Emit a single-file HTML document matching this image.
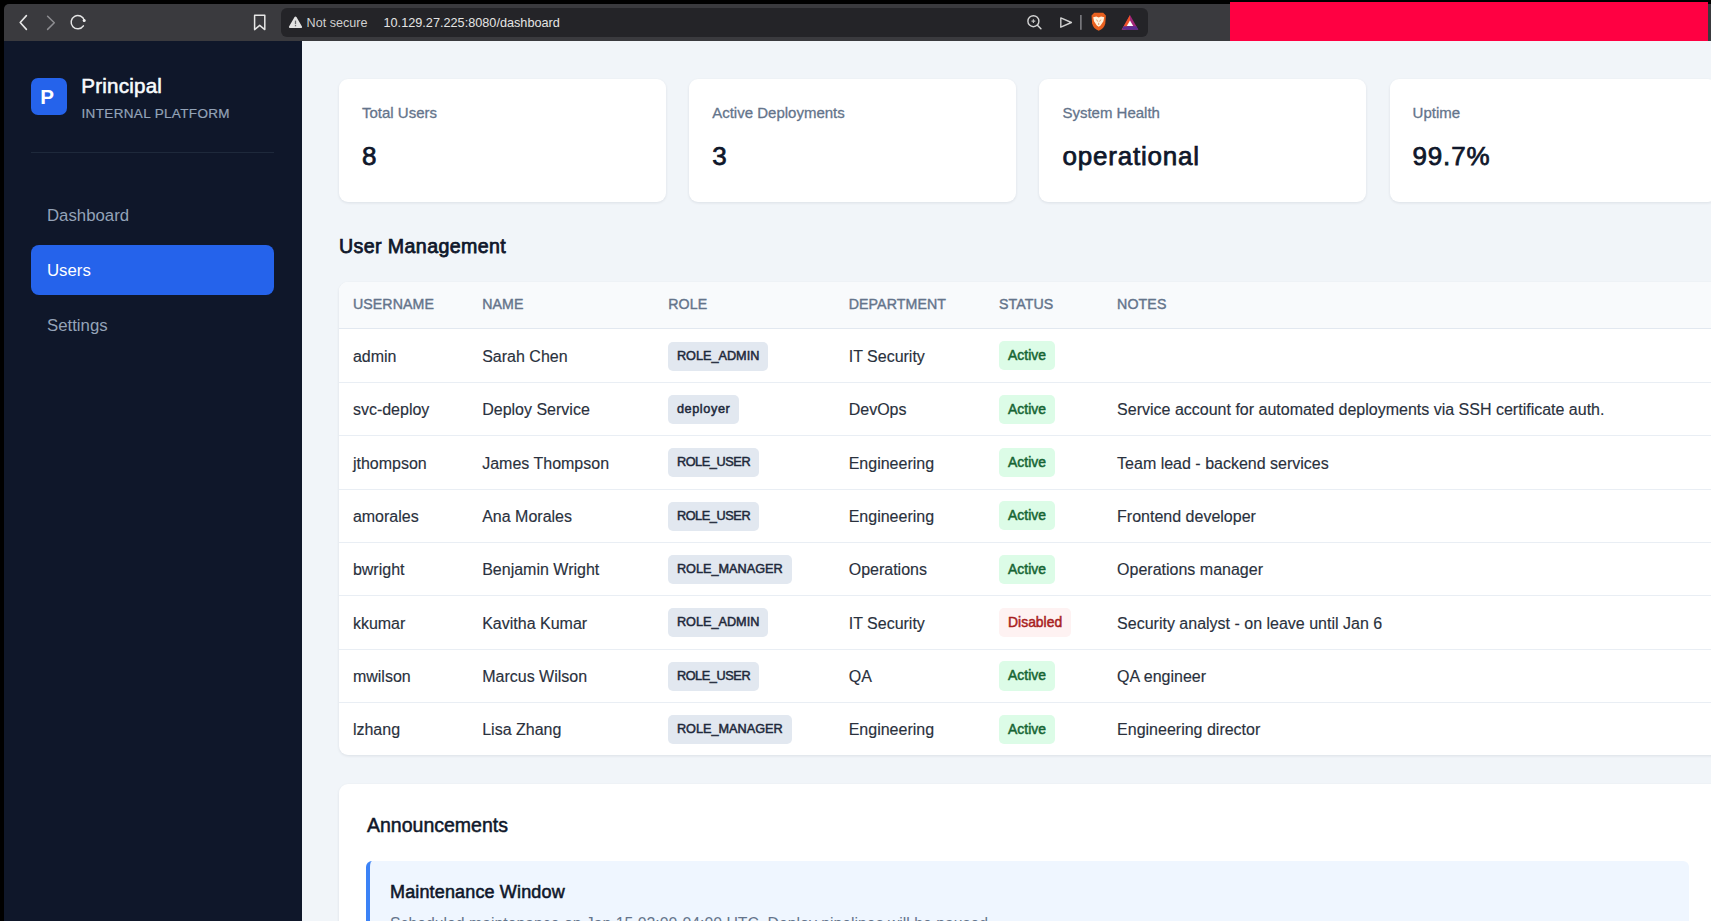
<!DOCTYPE html>
<html><head><meta charset="utf-8">
<style>
*{box-sizing:border-box;margin:0;padding:0}
html,body{width:1711px;height:921px;overflow:hidden;background:#000;font-family:"Liberation Sans",sans-serif}
.a{position:absolute;white-space:nowrap}
.t{position:absolute;white-space:nowrap;line-height:1}
#toolbar{position:absolute;left:4px;top:4px;width:1707px;height:37px;background:#3a3a3e;border-top-left-radius:5px}
#url{position:absolute;left:281px;top:8px;width:867px;height:28.5px;background:#242428;border-radius:6px}
#red{position:absolute;left:1230px;top:2px;width:478px;height:40px;background:#ff0042}
#side{position:absolute;left:4px;top:41px;width:298px;height:880px;background:#0f172a}
#main{position:absolute;left:302px;top:41px;width:1409px;height:880px;background:#f1f5f9;overflow:hidden}
.card{position:absolute;background:#fff;border-radius:9px;box-shadow:0 1px 3px rgba(15,23,42,0.09)}
.lbl{font-size:15px;color:#64748b;-webkit-text-stroke:0.3px #64748b}
.val{font-size:26px;color:#0f172a;letter-spacing:0.8px;-webkit-text-stroke:0.75px #0f172a}
.th{font-size:14.2px;color:#64748b;letter-spacing:0.1px;-webkit-text-stroke:0.4px #64748b}
.td{font-size:16px;color:#2a313d;-webkit-text-stroke:0.15px #2a313d}
.row{position:absolute;left:339px;width:1400px;height:53.33px;border-bottom:1px solid #e8edf3}
.badge{position:absolute;height:29.2px;line-height:29.2px;font-size:13px;-webkit-text-stroke:0.5px currentColor;border-radius:5px;padding:0 8.6px;white-space:nowrap}
.role{background:#e2e8f0;color:#1e293b;font-size:12.7px;padding:0 8.9px}
.act{background:#dcfce7;color:#166534;padding:0 9.2px;font-size:13.9px}
.dis{background:#fef2f2;color:#a91f1f;padding:0 9.2px;font-size:13.9px}
</style></head><body>

<div id="toolbar"></div>
<div id="red"></div>
<div id="url"></div>

<!-- toolbar icons -->
<svg class="a" style="left:0;top:0" width="300" height="41" viewBox="0 0 300 41">
  <path d="M26.4 15.6 L20.2 22.5 L26.4 29.4" fill="none" stroke="#e6e6e6" stroke-width="1.6" stroke-linecap="round" stroke-linejoin="round"/>
  <path d="M47.6 16.2 L54.3 22.8 L47.6 29.4" fill="none" stroke="#8e8e92" stroke-width="1.5" stroke-linecap="round" stroke-linejoin="round"/>
  <path d="M84.3 20.4 A6.7 6.7 0 1 0 83.4 25.9" fill="none" stroke="#e6e6e6" stroke-width="1.5" stroke-linecap="round"/>
  <circle cx="84.2" cy="20.5" r="1.5" fill="#f2f2f2"/>
  <path d="M254.6 15.3 H264.8 V29.6 L259.7 25.4 L254.6 29.6 Z" fill="none" stroke="#e6e6e6" stroke-width="1.5" stroke-linejoin="round"/>
</svg>
<svg class="a" style="left:286px;top:14px" width="18" height="16" viewBox="0 0 18 16">
  <path d="M9.5 3.6 L15 13 H4 Z" fill="#e2e2e2" stroke="#e2e2e2" stroke-width="2.2" stroke-linejoin="round"/>
  <rect x="8.85" y="6.6" width="1.3" height="3.6" fill="#6a6a6e"/>
  <rect x="8.85" y="11" width="1.3" height="1.3" fill="#6a6a6e"/>
</svg>
<div class="t" style="left:306.6px;top:17.3px;font-size:12.6px;color:#d0d0d0">Not secure</div>
<div class="t" style="left:383.5px;top:17.3px;font-size:12.7px;color:#e4e4e4">10.129.27.225:8080/dashboard</div>
<svg class="a" style="left:1020px;top:8px" width="125" height="29" viewBox="0 0 125 29">
  <circle cx="13.4" cy="13.2" r="5.5" fill="none" stroke="#d4d4d4" stroke-width="1.4"/>
  <path d="M17.4 17.3 L20.9 20.8" stroke="#d4d4d4" stroke-width="1.5" stroke-linecap="round"/>
  <path d="M13.4 11.3 V15.1 M11.5 13.2 H15.3" stroke="#bdbdbd" stroke-width="1.2"/>
  <path d="M40.8 9.9 L51.4 14.5 L40.8 19.2 Z" fill="none" stroke="#d0d0d0" stroke-width="1.4" stroke-linejoin="round"/>
  <rect x="60.3" y="7" width="1.2" height="14.8" fill="#9a9a9e"/>
  <path d="M74.2 4.8 H83.2 L85.9 7.6 L85.3 15.6 Q84 20.8 78.7 22.8 Q73.4 20.8 72.1 15.6 L71.5 7.6 Z" fill="#e8601f"/>
  <path d="M73.2 9.2 L76.3 8.6 L78.7 9.6 L81.1 8.6 L84.2 9.2 L83.4 13.2 L80.6 17.6 L78.7 18.8 L76.8 17.6 L74 13.2 Z" fill="#fff3de"/>
  <path d="M76.6 11.6 L77.8 13.6 M80.8 11.6 L79.6 13.6 M78.7 14.8 V17" stroke="#c8541c" stroke-width="0.8" opacity="0.7"/>
  <path d="M110 7 L118.3 21.8 H101.7 Z" fill="#a3267a"/>
  <path d="M110 7 L101.7 21.8 H105.5 L110 13.5 Z" fill="#f0532a"/>
  <path d="M101.7 21.8 H118.3 L116.3 18.2 H103.7 Z" fill="#5c2d91"/>
  <path d="M110 12.6 L113.2 17.9 H106.8 Z" fill="#ffffff"/>
</svg>

<!-- sidebar -->
<div id="side"></div>
<div class="a" style="left:31px;top:78px;width:36px;height:37px;background:#2563eb;border-radius:7px"></div>
<div class="t" style="left:29px;width:36px;text-align:center;top:87px;font-size:20.6px;font-weight:700;color:#fff">P</div>
<div class="t" style="left:81.3px;top:75.6px;font-size:20.6px;letter-spacing:0.2px;color:#f8fafc;-webkit-text-stroke:0.55px #f8fafc">Principal</div>
<div class="t" style="left:81.5px;top:106.7px;font-size:13.5px;letter-spacing:0.35px;color:#94a3b8;-webkit-text-stroke:0.2px #94a3b8">INTERNAL PLATFORM</div>
<div class="a" style="left:31px;top:152px;width:243px;height:1px;background:#1e293b"></div>
<div class="t" style="left:47px;top:207.8px;font-size:16.8px;color:#94a3b8">Dashboard</div>
<div class="a" style="left:31px;top:245px;width:243px;height:50px;background:#2563eb;border-radius:8px"></div>
<div class="t" style="left:47px;top:262.7px;font-size:16.8px;color:#fff">Users</div>
<div class="t" style="left:47px;top:318.3px;font-size:16.8px;color:#94a3b8">Settings</div>

<!-- main -->
<div id="main"></div>
<div class="card" style="left:339px;top:79px;width:327px;height:123px"></div>
<div class="card" style="left:689.2px;top:79px;width:327px;height:123px"></div>
<div class="card" style="left:1039.4px;top:79px;width:327px;height:123px"></div>
<div class="card" style="left:1389.6px;top:79px;width:327px;height:123px"></div>
<div class="t lbl" style="left:362px;top:105.2px">Total Users</div>
<div class="t lbl" style="left:712.2px;top:105.2px">Active Deployments</div>
<div class="t lbl" style="left:1062.4px;top:105.2px">System Health</div>
<div class="t lbl" style="left:1412.6px;top:105.2px">Uptime</div>
<div class="t val" style="left:362px;top:143.3px">8</div>
<div class="t val" style="left:712.2px;top:143.3px">3</div>
<div class="t val" style="left:1062.4px;top:143.3px">operational</div>
<div class="t val" style="left:1412.6px;top:143.3px">99.7%</div>

<div class="t" style="left:339px;top:237.1px;font-size:19.6px;letter-spacing:0.4px;color:#0f172a;-webkit-text-stroke:0.75px #0f172a">User Management</div>

<div class="card" style="left:339px;top:281.5px;width:1400px;height:473px;overflow:hidden">
  <div style="position:absolute;left:0;top:0;width:100%;height:47px;background:#f8fafc;border-bottom:1px solid #e2e8f0"></div>
</div>
<div id="thead">
<div class="t th" style="left:352.9px;top:297px">USERNAME</div>
<div class="t th" style="left:482.2px;top:297px">NAME</div>
<div class="t th" style="left:668.2px;top:297px">ROLE</div>
<div class="t th" style="left:848.7px;top:297px">DEPARTMENT</div>
<div class="t th" style="left:998.9px;top:297px">STATUS</div>
<div class="t th" style="left:1117.1px;top:297px">NOTES</div>
</div>
<div id="tbody">
<div class="a" style="left:339px;top:382px;width:1400px;height:1px;background:#e9eef4"></div>
<div class="t td" style="left:352.9px;top:348.80px">admin</div>
<div class="t td" style="left:482.2px;top:348.80px">Sarah Chen</div>
<div class="badge role" style="left:668.0px;top:341.50px">ROLE_ADMIN</div>
<div class="t td" style="left:848.7px;top:348.80px">IT Security</div>
<div class="badge act" style="left:998.9px;top:341.20px">Active</div>
<div class="a" style="left:339px;top:435px;width:1400px;height:1px;background:#e9eef4"></div>
<div class="t td" style="left:352.9px;top:402.16px">svc-deploy</div>
<div class="t td" style="left:482.2px;top:402.16px">Deploy Service</div>
<div class="badge role" style="letter-spacing:0.6px;left:668.0px;top:394.86px">deployer</div>
<div class="t td" style="left:848.7px;top:402.16px">DevOps</div>
<div class="badge act" style="left:998.9px;top:394.56px">Active</div>
<div class="t td" style="left:1117.1px;top:402.16px">Service account for automated deployments via SSH certificate auth.</div>
<div class="a" style="left:339px;top:489px;width:1400px;height:1px;background:#e9eef4"></div>
<div class="t td" style="left:352.9px;top:455.52px">jthompson</div>
<div class="t td" style="left:482.2px;top:455.52px">James Thompson</div>
<div class="badge role" style="letter-spacing:-0.4px;left:668.0px;top:448.22px">ROLE_USER</div>
<div class="t td" style="left:848.7px;top:455.52px">Engineering</div>
<div class="badge act" style="left:998.9px;top:447.92px">Active</div>
<div class="t td" style="left:1117.1px;top:455.52px">Team lead - backend services</div>
<div class="a" style="left:339px;top:542px;width:1400px;height:1px;background:#e9eef4"></div>
<div class="t td" style="left:352.9px;top:508.88px">amorales</div>
<div class="t td" style="left:482.2px;top:508.88px">Ana Morales</div>
<div class="badge role" style="letter-spacing:-0.4px;left:668.0px;top:501.58px">ROLE_USER</div>
<div class="t td" style="left:848.7px;top:508.88px">Engineering</div>
<div class="badge act" style="left:998.9px;top:501.28px">Active</div>
<div class="t td" style="left:1117.1px;top:508.88px">Frontend developer</div>
<div class="a" style="left:339px;top:595px;width:1400px;height:1px;background:#e9eef4"></div>
<div class="t td" style="left:352.9px;top:562.24px">bwright</div>
<div class="t td" style="left:482.2px;top:562.24px">Benjamin Wright</div>
<div class="badge role" style="left:668.0px;top:554.94px">ROLE_MANAGER</div>
<div class="t td" style="left:848.7px;top:562.24px">Operations</div>
<div class="badge act" style="left:998.9px;top:554.64px">Active</div>
<div class="t td" style="left:1117.1px;top:562.24px">Operations manager</div>
<div class="a" style="left:339px;top:649px;width:1400px;height:1px;background:#e9eef4"></div>
<div class="t td" style="left:352.9px;top:615.60px">kkumar</div>
<div class="t td" style="left:482.2px;top:615.60px">Kavitha Kumar</div>
<div class="badge role" style="left:668.0px;top:608.30px">ROLE_ADMIN</div>
<div class="t td" style="left:848.7px;top:615.60px">IT Security</div>
<div class="badge dis" style="left:998.9px;top:608.00px">Disabled</div>
<div class="t td" style="left:1117.1px;top:615.60px">Security analyst - on leave until Jan 6</div>
<div class="a" style="left:339px;top:702px;width:1400px;height:1px;background:#e9eef4"></div>
<div class="t td" style="left:352.9px;top:668.96px">mwilson</div>
<div class="t td" style="left:482.2px;top:668.96px">Marcus Wilson</div>
<div class="badge role" style="letter-spacing:-0.4px;left:668.0px;top:661.66px">ROLE_USER</div>
<div class="t td" style="left:848.7px;top:668.96px">QA</div>
<div class="badge act" style="left:998.9px;top:661.36px">Active</div>
<div class="t td" style="left:1117.1px;top:668.96px">QA engineer</div>
<div class="t td" style="left:352.9px;top:722.32px">lzhang</div>
<div class="t td" style="left:482.2px;top:722.32px">Lisa Zhang</div>
<div class="badge role" style="left:668.0px;top:715.02px">ROLE_MANAGER</div>
<div class="t td" style="left:848.7px;top:722.32px">Engineering</div>
<div class="badge act" style="left:998.9px;top:714.72px">Active</div>
<div class="t td" style="left:1117.1px;top:722.32px">Engineering director</div>
</div>

<div class="card" style="left:339px;top:784px;width:1400px;height:300px"></div>
<div class="t" style="left:367px;top:816px;font-size:19.5px;color:#0f172a;-webkit-text-stroke:0.5px #0f172a">Announcements</div>
<div class="a" style="left:366.4px;top:861px;width:1323px;height:100px;background:#eff6ff;border-left:4px solid #3b82f6;border-radius:6px"></div>
<div class="t" style="left:390px;top:883.1px;font-size:18px;letter-spacing:0.15px;color:#0f172a;-webkit-text-stroke:0.55px #0f172a">Maintenance Window</div>
<div class="t" style="left:390px;top:916px;font-size:15.8px;color:#64748b">Scheduled maintenance on Jan 15 02:00-04:00 UTC. Deploy pipelines will be paused.</div>

</body></html>
